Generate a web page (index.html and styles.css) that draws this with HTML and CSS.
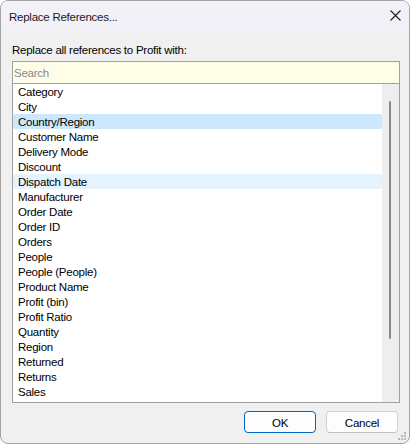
FILE: index.html
```html
<!DOCTYPE html>
<html>
<head>
<meta charset="utf-8">
<link rel="stylesheet" href="styles.css">
</head>
<body>
<div class="window">
  <div class="titlebar">
    <span class="title">Replace References...</span>
    <span class="close">
      <svg width="11" height="11" viewBox="0 0 11 11"><path d="M0.5 0.5 L10.5 10.5 M10.5 0.5 L0.5 10.5" stroke="#1b1b1b" stroke-width="1.1" fill="none"/></svg>
    </span>
  </div>
  <div class="content">
    <div class="label">Replace all references to Profit with:</div>
    <div class="picker">
      <div class="search">Search</div>
      <div class="list">
        <div class="rows">
          <div class="row">Category</div>
          <div class="row">City</div>
          <div class="row selected">Country/Region</div>
          <div class="row">Customer Name</div>
          <div class="row">Delivery Mode</div>
          <div class="row">Discount</div>
          <div class="row hover">Dispatch Date</div>
          <div class="row">Manufacturer</div>
          <div class="row">Order Date</div>
          <div class="row">Order ID</div>
          <div class="row">Orders</div>
          <div class="row">People</div>
          <div class="row">People (People)</div>
          <div class="row">Product Name</div>
          <div class="row">Profit (bin)</div>
          <div class="row">Profit Ratio</div>
          <div class="row">Quantity</div>
          <div class="row">Region</div>
          <div class="row">Returned</div>
          <div class="row">Returns</div>
          <div class="row">Sales</div>
        </div>
        <div class="track"><div class="thumb"></div></div>
      </div>
    </div>
    <div class="footer">
      <button class="btn primary">OK</button>
      <button class="btn">Cancel</button>
    </div>
  </div>
  <div class="grip">
    <span class="dot d1"></span><span class="dot d2"></span><span class="dot d3"></span>
    <span class="dot d4"></span><span class="dot d5"></span><span class="dot d6"></span>
  </div>
</div>
</body>
</html>
```

FILE: styles.css
```css
html, body {
  margin: 0;
  padding: 0;
  background: #ffffff;
}
body {
  font-family: "Liberation Sans", Arial, sans-serif;
  font-size: 11.5px;
  letter-spacing: -0.25px;
  color: #000000;
}
.window {
  position: relative;
  box-sizing: border-box;
  width: 410px;
  height: 444px;
  border: 1px solid #a3a3a3;
  border-radius: 8px;
  overflow: hidden;
  background: #f0f0f0;
  display: flex;
  flex-direction: column;
}
.titlebar {
  height: 30px;
  flex: none;
  background: #f3f1f8;
  display: flex;
  align-items: center;
  justify-content: space-between;
  padding: 0 8px 0 8px;
}
.title {
  color: #1a1a1a;
  padding-top: 2px;
}
.close {
  display: flex;
  width: 11px;
  height: 11px;
  margin-top: -1px;
}
.content {
  flex: 1;
  display: flex;
  flex-direction: column;
  padding: 11px 9px 0 11px;
}
.label {
  height: 14px;
  line-height: 15px;
  padding-top: 1px;
  margin-bottom: 4px;
}
.picker {
  box-sizing: border-box;
  height: 342px;
  border: 1px solid #a0a0a0;
  display: flex;
  flex-direction: column;
  background: #ffffff;
}
.search {
  flex: none;
  height: 20px;
  padding-top: 1px;
  line-height: 21px;
  box-sizing: content-box;
  border-bottom: 1px solid #a0a0a0;
  background: #fdfde8;
  color: #8a8a8a;
  padding-left: 1px;
}
.list {
  flex: 1;
  display: flex;
  overflow: hidden;
  min-height: 0;
}
.rows {
  width: 369px;
  flex: none;
  overflow: hidden;
}
.row {
  height: 14px;
  padding-top: 1px;
  line-height: 15px;
  padding-left: 5px;
  border-radius: 2px;
  white-space: nowrap;
}
.row.selected {
  background: #cce8ff;
}
.row.hover {
  background: #e5f3ff;
}
.track {
  flex: 1;
  background: #eeeeee;
  position: relative;
}
.thumb {
  position: absolute;
  left: 7px;
  top: 17px;
  width: 2px;
  height: 238px;
  border-radius: 1px;
  background: #8a8a8a;
}
.footer {
  display: flex;
  justify-content: flex-end;
  gap: 10px;
  margin-top: 8px;
  padding-right: 2px;
}
.btn {
  box-sizing: border-box;
  width: 72px;
  height: 22px;
  font-family: "Liberation Sans", Arial, sans-serif;
  font-size: 11.5px;
  letter-spacing: -0.25px;
  color: #000000;
  background: #fdfdfd;
  border: 1px solid #d0d0d0;
  border-bottom-color: #c0c0c0;
  border-radius: 4px;
  padding: 1px 0 0 0;
}
.btn.primary {
  border: 1px solid #0067c0;
}
.grip {
  position: absolute;
  right: 2px;
  bottom: 2px;
  width: 9px;
  height: 9px;
}
.dot {
  position: absolute;
  width: 2px;
  height: 2px;
  background: #b8b8b8;
}
.d1 { left: 6px; top: 0; }
.d2 { left: 3px; top: 3px; }
.d3 { left: 6px; top: 3px; }
.d4 { left: 0; top: 6px; }
.d5 { left: 3px; top: 6px; }
.d6 { left: 6px; top: 6px; }
```
